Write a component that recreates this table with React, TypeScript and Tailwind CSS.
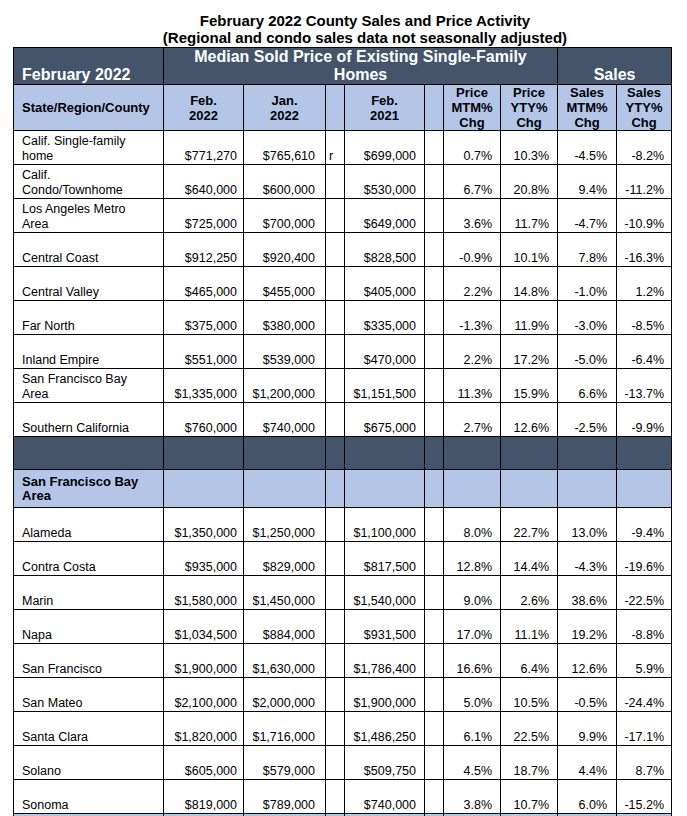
const DARK = "bg-[#44546a]";
const LIGHT = "bg-[#b4c6e7]";

const topRows = [
  ["Calif. Single-family\nhome", "$771,270", "$765,610", "r", "$699,000", "0.7%", "10.3%", "-4.5%", "-8.2%"],
  ["Calif.\nCondo/Townhome", "$640,000", "$600,000", "", "$530,000", "6.7%", "20.8%", "9.4%", "-11.2%"],
  ["Los Angeles Metro\nArea", "$725,000", "$700,000", "", "$649,000", "3.6%", "11.7%", "-4.7%", "-10.9%"],
  ["Central Coast", "$912,250", "$920,400", "", "$828,500", "-0.9%", "10.1%", "7.8%", "-16.3%"],
  ["Central Valley", "$465,000", "$455,000", "", "$405,000", "2.2%", "14.8%", "-1.0%", "1.2%"],
  ["Far North", "$375,000", "$380,000", "", "$335,000", "-1.3%", "11.9%", "-3.0%", "-8.5%"],
  ["Inland Empire", "$551,000", "$539,000", "", "$470,000", "2.2%", "17.2%", "-5.0%", "-6.4%"],
  ["San Francisco Bay\nArea", "$1,335,000", "$1,200,000", "", "$1,151,500", "11.3%", "15.9%", "6.6%", "-13.7%"],
  ["Southern California", "$760,000", "$740,000", "", "$675,000", "2.7%", "12.6%", "-2.5%", "-9.9%"],
];

const bayRows = [
  ["Alameda", "$1,350,000", "$1,250,000", "", "$1,100,000", "8.0%", "22.7%", "13.0%", "-9.4%"],
  ["Contra Costa", "$935,000", "$829,000", "", "$817,500", "12.8%", "14.4%", "-4.3%", "-19.6%"],
  ["Marin", "$1,580,000", "$1,450,000", "", "$1,540,000", "9.0%", "2.6%", "38.6%", "-22.5%"],
  ["Napa", "$1,034,500", "$884,000", "", "$931,500", "17.0%", "11.1%", "19.2%", "-8.8%"],
  ["San Francisco", "$1,900,000", "$1,630,000", "", "$1,786,400", "16.6%", "6.4%", "12.6%", "5.9%"],
  ["San Mateo", "$2,100,000", "$2,000,000", "", "$1,900,000", "5.0%", "10.5%", "-0.5%", "-24.4%"],
  ["Santa Clara", "$1,820,000", "$1,716,000", "", "$1,486,250", "6.1%", "22.5%", "9.9%", "-17.1%"],
  ["Solano", "$605,000", "$579,000", "", "$509,750", "4.5%", "18.7%", "4.4%", "8.7%"],
  ["Sonoma", "$819,000", "$789,000", "", "$740,000", "3.8%", "10.7%", "6.0%", "-15.2%"],
];

// padding per column, the sheet's number formats leave uneven gaps on the right
const cellPad = ["pl-[8px] text-left", "pr-[6px] text-right", "pr-[10px] text-right", "pl-[3px] text-left", "pr-[8px] text-right", "", "pr-[8px] text-right", "pr-[8px] text-right", "pr-[9px] text-right", "pr-[7px] text-right"];

const DataRow = ({ row }: { row: string[] }) => {
  const cells = [...row.slice(0, 5), "", ...row.slice(5)];
  return (
    <tr className="h-[34px]">
      {cells.map((c, i) => (
        <td key={i} className={`border border-black align-bottom whitespace-pre-line leading-[15px] ${cellPad[i]}`}>{c}</td>
      ))}
    </tr>
  );
};

const BandRow = ({ color, h, label }: { color: string; h: string; label?: string }) => (
  <tr className={h}>
    {Array.from({ length: 10 }).map((_, i) => (
      <td key={i} className={`border border-black ${color} ${i === 0 ? "pl-[8px] text-[13px] font-bold leading-[14px] whitespace-pre-line align-middle" : ""}`}>
        {i === 0 ? label : null}
      </td>
    ))}
  </tr>
);

export default function App() {
  const subHeads = [
    { t: "State/Region/County", c: "pl-[8px] text-left" },
    { t: "Feb.\n2022", c: "text-center" },
    { t: "Jan.\n2022", c: "text-center" },
    { t: "", c: "" },
    { t: "Feb.\n2021", c: "text-center" },
    { t: "", c: "" },
    { t: "Price\nMTM%\nChg", c: "text-center" },
    { t: "Price\nYTY%\nChg", c: "text-center" },
    { t: "Sales\nMTM%\nChg", c: "text-center" },
    { t: "Sales\nYTY%\nChg", c: "text-center" },
  ];

  return (
    <div className="bg-white min-h-[816px] overflow-hidden font-['Liberation_Sans',Arial,sans-serif] text-black">
      <div className="ml-[13px] w-[658px] pt-[12px]">
        <div className="pl-[46px] text-center text-[15px] font-bold leading-[17px]">
          <p>February 2022 County Sales and Price Activity</p>
          <p>(Regional and condo sales data not seasonally adjusted)</p>
        </div>
        <table className="mt-[1px] w-[658px] table-fixed border-collapse text-[12.5px]">
          <colgroup>
            <col className="w-[150px]" />
            <col className="w-[80px]" />
            <col className="w-[82px]" />
            <col className="w-[19px]" />
            <col className="w-[80px]" />
            <col className="w-[19px]" />
            <col className="w-[57px]" />
            <col className="w-[57px]" />
            <col className="w-[59px]" />
            <col className="w-[55px]" />
          </colgroup>
          <tbody>
            <tr className={`h-[36px] ${DARK} text-white text-[16px] font-bold leading-[18px]`}>
              <td className="border border-black pl-[8px] align-bottom">February 2022</td>
              <td colSpan={7} className="border border-black text-center align-bottom">
                Median Sold Price of Existing Single-Family
                <br />
                Homes
              </td>
              <td colSpan={2} className="border border-black text-center align-bottom">Sales</td>
            </tr>
            <tr className={`h-[46px] ${LIGHT} text-[13px] font-bold leading-[15px]`}>
              {subHeads.map((s, i) => (
                <td key={i} className={`border border-black align-middle whitespace-pre-line ${s.c}`}>{s.t}</td>
              ))}
            </tr>
            {topRows.map((r, i) => (
              <DataRow key={i} row={r} />
            ))}
            <BandRow color={DARK} h="h-[33px]" />
            <BandRow color={LIGHT} h="h-[38px]" label={"San Francisco Bay\nArea"} />
            {bayRows.map((r, i) => (
              <DataRow key={i} row={r} />
            ))}
            <BandRow color={LIGHT} h="h-[30px]" />
          </tbody>
        </table>
      </div>
    </div>
  );
}
